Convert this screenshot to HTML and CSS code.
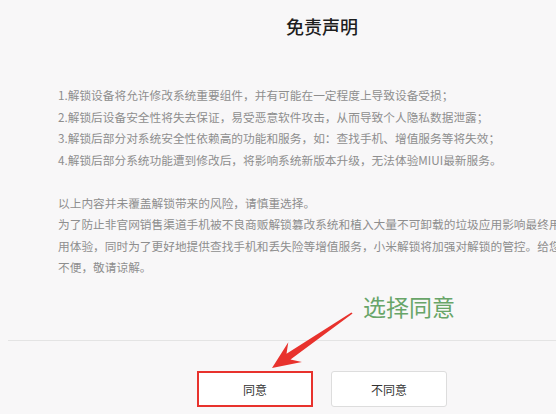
FILE: index.html
```html
<!DOCTYPE html>
<html lang="zh-CN">

<head>
  <meta charset="UTF-8">
  <meta name="viewport" content="width=device-width, initial-scale=1.0">
  <title>免责声明</title>
  <link rel="stylesheet" href="styles.css">
</head>

<body>
  <div class="dialog">
    <h2 class="title">免责声明</h2>
    <div class="content">
      <p>1.解锁设备将允许修改系统重要组件，并有可能在一定程度上导致设备受损；<br>
        2.解锁后设备安全性将失去保证，易受恶意软件攻击，从而导致个人隐私数据泄露；<br>
        3.解锁后部分对系统安全性依赖高的功能和服务，如：查找手机、增值服务等将失效；<br>
        4.解锁后部分系统功能遭到修改后，将影响系统新版本升级，无法体验MIUI最新服务。</p>
      <p>以上内容并未覆盖解锁带来的风险，请慎重选择。<br>
        为了防止非官网销售渠道手机被不良商贩解锁篡改系统和植入大量不可卸载的垃圾应用影响最终用户的使用体验，同时为了更好地提供查找手机和丢失险等增值服务，小米解锁将加强对解锁的管控。给您带来的不便，敬请谅解。</p>
    </div>
    <div class="footer">
      <button class="btn btn-agree">同意</button>
      <button class="btn">不同意</button>
    </div>
  </div>

  <!-- 截图上的标注 -->
  <span class="note">选择同意</span>
  <svg class="arrow" width="556" height="414" viewBox="0 0 556 414">
    <polygon points="351.4,312.4 286.5,353.8 288.3,342.2 272,368 301.9,362 290.5,359.6 352.6,313.6" fill="#e8322d" />
  </svg>
</body>

</html>
```

FILE: styles.css
```css
body {
  margin: 0;
  background-color: #f8f7f8;
  font-family: "Noto Sans CJK SC", "Noto Sans", sans-serif;
  overflow: hidden;
  position: relative;
  height: 414px;
}

.dialog {
  margin-left: 8px;
  width: 628px;
}

.title {
  margin: 14px 0 0;
  height: 24px;
  line-height: 24px;
  font-size: 18px;
  font-weight: 500;
  color: #1e1e1e;
  text-align: center;
}

.content {
  margin-top: 46px;
  padding-left: 50px;
  width: 542px;
  height: 214px;
  font-size: 11.7px;
  line-height: 21.5px;
  color: #8e8e8e;
}

.content p {
  margin: 0 0 21.5px;
}

.footer {
  border-top: 1px solid #e4e4e4;
  margin-top: 42px;
  padding-top: 30px;
  display: flex;
  justify-content: center;
  gap: 18px;
}

.btn {
  width: 116px;
  height: 36px;
  background-color: #fff;
  border: 1px solid #ddd;
  border-radius: 3px;
  font-family: inherit;
  font-size: 12px;
  color: #333;
}

/* 红框 */
.btn-agree {
  border: 2px solid #e8322d;
  border-radius: 0;
}

.note {
  position: absolute;
  left: 363px;
  top: 293px;
  font-size: 23px;
  line-height: 26px;
  color: #68a568;
}

.arrow {
  position: absolute;
  left: 0;
  top: 0;
  pointer-events: none;
}
```
